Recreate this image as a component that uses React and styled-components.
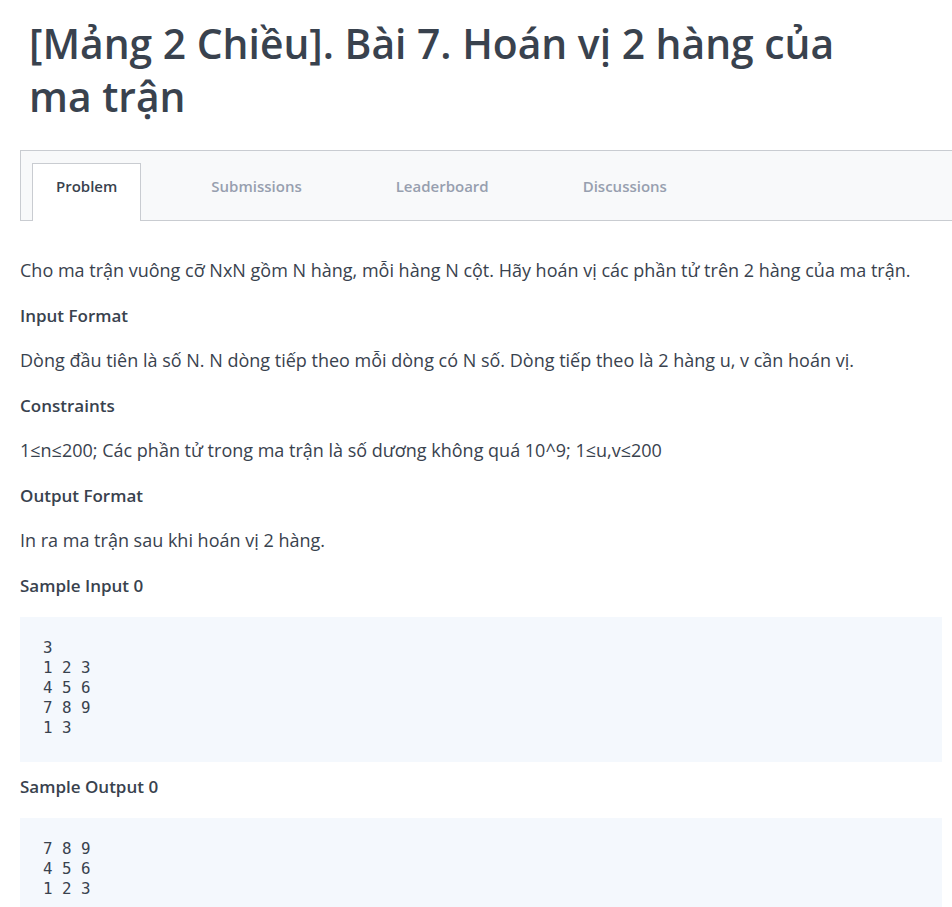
import styled, { createGlobalStyle } from "styled-components";

const GlobalStyle = createGlobalStyle`
  html, body {
    margin: 0;
    padding: 0;
    background: #fff;
    overflow-x: hidden;
  }
  body {
    font-family: "Open Sans", "Noto Sans", sans-serif;
    color: #39424e;
  }
`;

const tabs = ["Problem", "Submissions", "Leaderboard", "Discussions"];

const sections = [
  {
    title: "Input Format",
    text: "Dòng đầu tiên là số N. N dòng tiếp theo mỗi dòng có N số. Dòng tiếp theo là 2 hàng u, v cần hoán vị.",
  },
  {
    title: "Constraints",
    text: "1≤n≤200; Các phần tử trong ma trận là số dương không quá 10^9; 1≤u,v≤200",
  },
  {
    title: "Output Format",
    text: "In ra ma trận sau khi hoán vị 2 hàng.",
  },
];

const App = () => {
  return (
    <Page>
      <GlobalStyle />
      <Title>[Mảng 2 Chiều]. Bài 7. Hoán vị 2 hàng của ma trận</Title>

      <TabBar>
        {tabs.map((t, i) => (
          <Tab key={t} $active={i === 0}>
            {t}
          </Tab>
        ))}
      </TabBar>

      <Content>
        <Para>
          Cho ma trận vuông cỡ NxN gồm N hàng, mỗi hàng N cột. Hãy hoán vị các
          phần tử trên 2 hàng của ma trận.
        </Para>
        {sections.map((s) => (
          <div key={s.title}>
            <Heading>{s.title}</Heading>
            <Para>{s.text}</Para>
          </div>
        ))}

        <Heading>Sample Input 0</Heading>
        <Code>{"3\n1 2 3\n4 5 6\n7 8 9\n1 3"}</Code>

        <Heading>Sample Output 0</Heading>
        <Code>{"7 8 9\n4 5 6\n1 2 3"}</Code>
      </Content>
    </Page>
  );
};

export default App;

const Page = styled.div`
  padding: 0 10px 40px 20px;
`;

const Title = styled.h1`
  margin: 17px 90px 0 9px;
  font-size: 40.8px;
  line-height: 53px;
  font-weight: 600;
  color: #39424e;
`;

const TabBar = styled.div`
  display: flex;
  align-items: flex-end;
  margin: 27px -20px 0 0;
  height: 57px;
  padding: 12px 0 0 11px;
  background: #f8f9fa;
  border-top: 1px solid #c9ccd1;
  border-left: 1px solid #c9ccd1;
  border-bottom: 1px solid #c9ccd1;
`;

const Tab = styled.div`
  box-sizing: border-box;
  display: flex;
  align-items: center;
  justify-content: center;
  height: 58px;
  margin-bottom: -1px;
  margin-right: 46px;
  padding: 0 23px 14px;
  font-size: 15px;
  font-weight: 600;
  color: ${(p) => (p.$active ? "#39424e" : "#979faf")};
  background: ${(p) => (p.$active ? "#fff" : "transparent")};
  border: 1px solid ${(p) => (p.$active ? "#c9ccd1" : "transparent")};
  border-bottom: none;
`;

const Content = styled.div`
  padding-top: 37px;
`;

const Para = styled.p`
  margin: 0 0 20px;
  font-size: 18px;
  line-height: 25px;
  color: #39424e;
`;

const Heading = styled.h3`
  margin: 0 0 20px;
  font-size: 17px;
  line-height: 25px;
  font-weight: 600;
  color: #39424e;
`;

const Code = styled.pre`
  margin: -1.5px 0 12.5px;
  padding: 21px 23px 24px;
  background: #f4f8fd;
  font-family: "DejaVu Sans Mono", "Liberation Mono", monospace;
  font-size: 15.8px;
  line-height: 20px;
  color: #39424e;
`;
